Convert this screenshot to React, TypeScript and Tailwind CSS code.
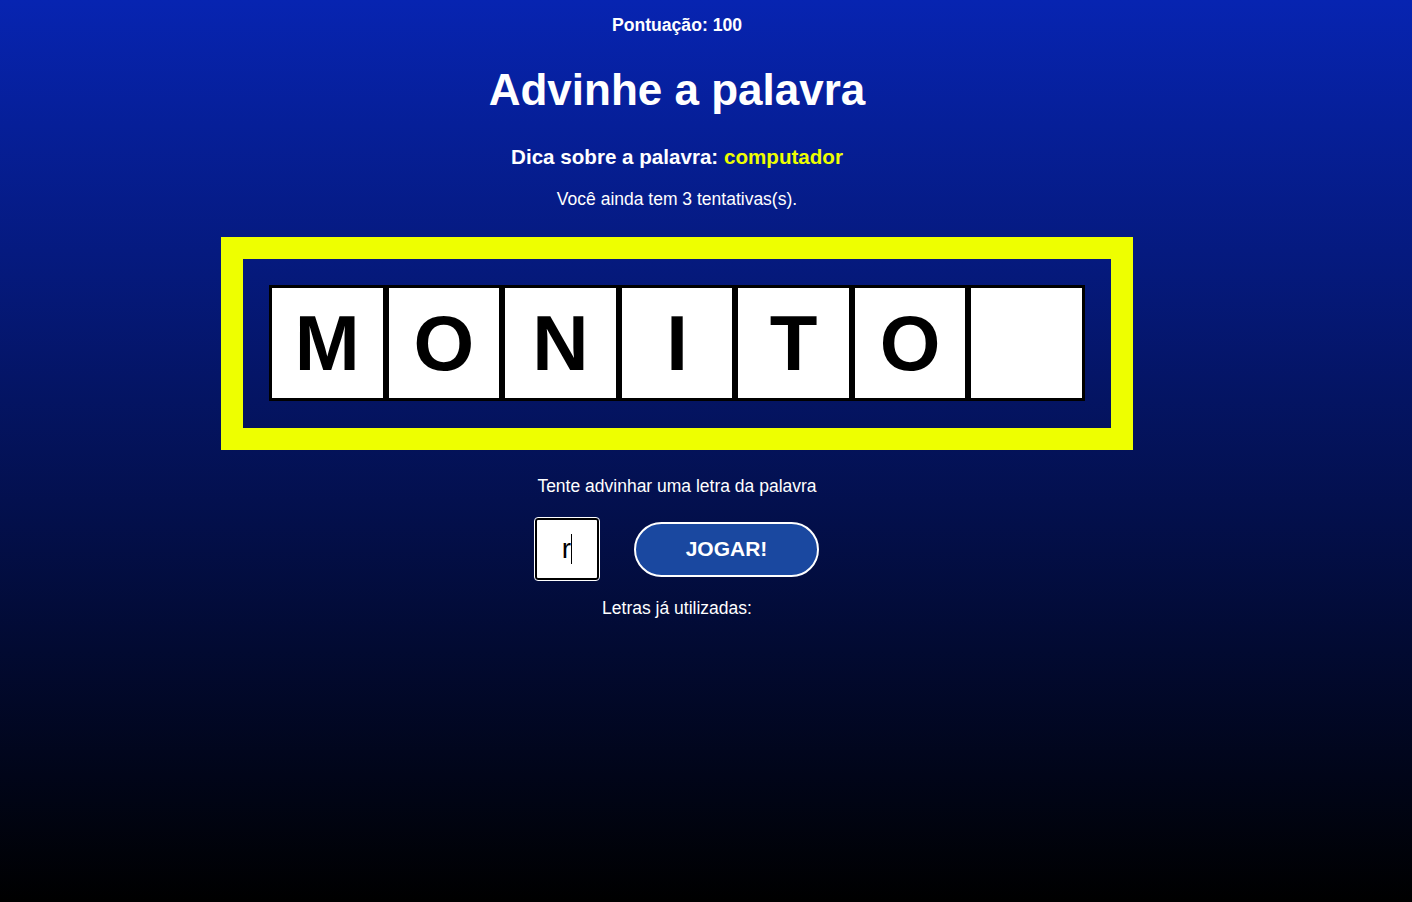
export default function App() {
  const letters = ["M", "O", "N", "I", "T", "O", ""];

  return (
    <div className="min-h-screen w-full bg-[linear-gradient(to_bottom,#0724b1,#000000)] font-['Liberation_Sans',Arial,sans-serif] text-white">
      <div className="w-[1354px] flex flex-col items-center">
        <div className="mt-[15px] text-[17.6px] leading-[20px] font-bold">
          Pontuação: 100
        </div>

        <h1 className="mt-[30px] text-[44px] leading-[50px] font-bold">
          Advinhe a palavra
        </h1>

        <div className="mt-[30px] text-[20.6px] leading-[23px] font-bold">
          Dica sobre a palavra: <span className="text-[#eeff00]">computador</span>
        </div>

        <p className="mt-[21px] text-[17.5px] leading-[20px]">
          Você ainda tem 3 tentativas(s).
        </p>

        <div className="mt-[28px] w-[912px] border-[22px] border-[#eeff00] pt-[26px] pb-[27px] px-[26px]">
          <div className="flex w-[816px] h-[116px]">
            {letters.map((l, i) => (
              <div
                key={i}
                className="flex-1 h-[116px] border-[3px] border-black bg-white flex items-center justify-center text-black text-[78px] font-bold leading-none"
              >
                {l}
              </div>
            ))}
          </div>
        </div>

        <p className="mt-[26px] text-[17.5px] leading-[20px]">
          Tente advinhar uma letra da palavra
        </p>

        <div className="mt-[22px] flex items-center gap-[35px]">
          <div className="w-[64px] h-[62px] rounded-[3px] border-2 border-black bg-white outline outline-1 outline-white flex items-center justify-center text-black text-[28px] font-normal">
            <span>r</span>
            <span className="w-px h-[30px] bg-black"></span>
          </div>
          <button className="w-[185px] h-[55px] rounded-full border-2 border-white bg-[#1a48a0] text-white text-[21px] font-bold">
            JOGAR!
          </button>
        </div>

        <p className="mt-[18px] text-[17.5px] leading-[20px]">
          Letras já utilizadas:
        </p>
      </div>
    </div>
  );
}
